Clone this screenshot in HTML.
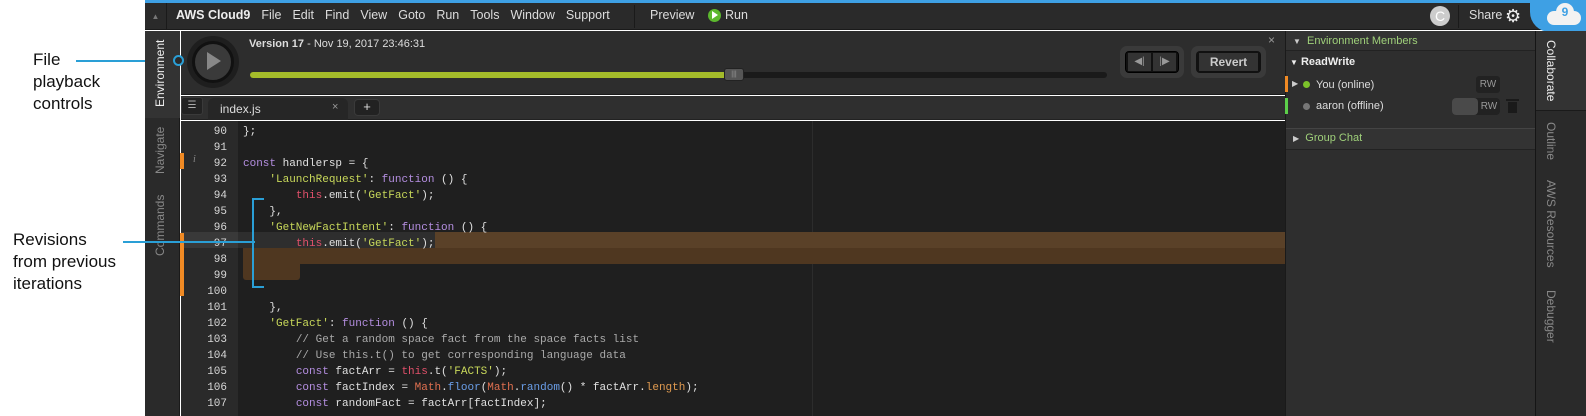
<!DOCTYPE html>
<html><head><style>
*{margin:0;padding:0;box-sizing:border-box}
body{width:1586px;height:416px;overflow:hidden;background:#fff;position:relative;font-family:"Liberation Sans",sans-serif}
.a{position:absolute}
.ann{font-size:17px;color:#111;line-height:22px}
.code{font-family:"Liberation Mono",monospace;font-size:11px;color:#e0e0e0;white-space:pre;line-height:16px}
.ln{font-family:"Liberation Mono",monospace;font-size:11px;color:#d8d8d8;line-height:16px;text-align:right;width:44px}
.k{color:#b48ee0}.s{color:#c8d85a}.t{color:#e0506a}.c{color:#aaa}.m{color:#e07050}.f{color:#6a9ee8}.o{color:#e09a50}
.vt{position:absolute;transform:rotate(-90deg);transform-origin:left top;font-size:12px;color:#888;white-space:nowrap}
.vr{position:absolute;transform:rotate(90deg);transform-origin:left top;font-size:12px;color:#888;white-space:nowrap}
</style></head><body>
<div class="a ann" style="left:33px;top:49px">File<br>playback<br>controls</div>
<div class="a ann" style="left:13px;top:229px">Revisions<br>from previous<br>iterations</div>
<div class="a" style="left:76px;top:60px;width:98px;height:2px;background:#2a9fd6"></div>
<div class="a" style="left:123px;top:241px;width:132px;height:2px;background:#2a9fd6;z-index:5"></div>
<div class="a" style="left:145px;top:0;width:1441px;height:3px;background:#3ea0e4"></div>
<div class="a" style="left:145px;top:3px;width:1441px;height:27px;background:#2a2a2a;border-bottom:1px solid #1a1a1a"></div>
<div class="a" style="left:145px;top:3px;width:22px;height:27px;border-right:1px solid #1a1a1a;color:#777;font-size:8px;text-align:center;line-height:27px">▲</div>
<div class="a" style="left:176px;top:8px;font-size:12.5px;color:#ddd;white-space:nowrap"><b style="color:#eee">AWS Cloud9</b><span style="margin-left:11px">File</span><span style="margin-left:11px">Edit</span><span style="margin-left:11px">Find</span><span style="margin-left:11px">View</span><span style="margin-left:11px">Goto</span><span style="margin-left:11px">Run</span><span style="margin-left:11px">Tools</span><span style="margin-left:11px">Window</span><span style="margin-left:11px">Support</span></div>
<div class="a" style="left:634px;top:5px;width:1px;height:23px;background:#1a1a1a"></div>
<div class="a" style="left:650px;top:8px;font-size:12.5px;color:#ddd">Preview</div>
<div class="a" style="left:708px;top:9px;width:13px;height:13px;border-radius:50%;background:#5cb82e"></div>
<div class="a" style="left:712px;top:11px;width:0;height:0;border-left:6px solid #fff;border-top:4.5px solid transparent;border-bottom:4.5px solid transparent"></div>
<div class="a" style="left:725px;top:8px;font-size:12.5px;color:#ddd">Run</div>
<div class="a" style="left:1430px;top:6px;width:20px;height:20px;border-radius:50%;background:#ccc;color:#fff;font-size:14px;text-align:center;line-height:20px">C</div>
<div class="a" style="left:1458px;top:5px;width:1px;height:23px;background:#1a1a1a"></div>
<div class="a" style="left:1469px;top:8px;font-size:12.5px;color:#ddd">Share</div>
<div class="a" style="left:1505px;top:6px;font-size:18px;color:#eee;line-height:20px">⚙</div>
<div class="a" style="left:1530px;top:0;width:56px;height:32px;background:#3ea0e4;border-bottom-left-radius:20px"></div>
<div class="a" style="left:1547px;top:11px;width:34px;height:14px;border-radius:7px;background:#f2f2f2"></div>
<div class="a" style="left:1556px;top:3px;width:18px;height:18px;border-radius:50%;background:#f2f2f2;color:#3ea0e4;font-size:12px;font-weight:bold;text-align:center;line-height:18px">9</div>
<div class="a" style="left:145px;top:31px;width:35px;height:385px;background:#2a2a2a;border-right:1px solid #1a1a1a"></div>
<div class="a" style="left:145px;top:31px;width:35px;height:87px;background:#333"></div>
<div class="vt" style="left:153px;top:107px;color:#eee">Environment</div>
<div class="vt" style="left:153px;top:174px">Navigate</div>
<div class="vt" style="left:153px;top:256px">Commands</div>
<div class="a" style="left:173px;top:55px;width:11px;height:11px;border-radius:50%;border:2px solid #2a9fd6;background:#2a2a2a;z-index:5"></div>
<div class="a" style="left:181px;top:31px;width:1104px;height:64px;background:#2d2d2d;border-bottom:1px solid #1a1a1a"></div>
<div class="a" style="left:187px;top:36px;width:52px;height:52px;border-radius:50%;background:#1e1e1e"></div>
<div class="a" style="left:192px;top:41px;width:42px;height:42px;border-radius:50%;background:#3a3a3a;border:3px solid #111"></div>
<div class="a" style="left:207px;top:52px;width:0;height:0;border-left:14px solid #888;border-top:9px solid transparent;border-bottom:9px solid transparent"></div>
<div class="a" style="left:249px;top:38px;font-size:11px;color:#ddd"><b>Version 17</b> - Nov 19, 2017 23:46:31</div>
<div class="a" style="left:250px;top:72px;width:857px;height:6px;border-radius:3px;background:#1a1a1a"></div>
<div class="a" style="left:250px;top:72px;width:480px;height:6px;border-radius:3px;background:#a4bb2a"></div>
<div class="a" style="left:724px;top:68px;width:20px;height:13px;border-radius:3px;background:#555;border:1px solid #222;color:#999;font-size:7px;text-align:center;line-height:11px">|||</div>
<div class="a" style="left:1268px;top:33px;font-size:12px;color:#999">×</div>
<div class="a" style="left:1120px;top:46px;width:64px;height:32px;border-radius:7px;background:#3a3a3a"></div>
<div class="a" style="left:1125px;top:51px;width:54px;height:22px;border-radius:4px;background:#111;border:1px solid #000"></div>
<div class="a" style="left:1128px;top:53px;width:23px;height:18px;background:#333;color:#999;font-size:10px;text-align:center;line-height:18px">◀|</div>
<div class="a" style="left:1153px;top:53px;width:23px;height:18px;background:#333;color:#999;font-size:10px;text-align:center;line-height:18px">|▶</div>
<div class="a" style="left:1191px;top:46px;width:75px;height:32px;border-radius:7px;background:#3a3a3a"></div>
<div class="a" style="left:1196px;top:51px;width:65px;height:22px;border-radius:4px;background:#111"></div>
<div class="a" style="left:1199px;top:53px;width:59px;height:18px;background:#333;color:#ccc;font-size:12px;font-weight:bold;text-align:center;line-height:18px">Revert</div>
<div class="a" style="left:181px;top:96px;width:1104px;height:24px;background:#2f2f2f;border-bottom:1px solid #222"></div>
<div class="a" style="left:181px;top:97px;width:22px;height:18px;border-radius:3px;background:#222;border:1px solid #3a3a3a;color:#aaa;font-size:10px;text-align:center;line-height:16px">☰</div>
<div class="a" style="left:208px;top:98px;width:140px;height:22px;border-radius:6px 6px 0 0;background:#262626"></div>
<div class="a" style="left:220px;top:102px;font-size:12px;color:#ddd">index.js</div>
<div class="a" style="left:332px;top:101px;font-size:11px;color:#999">×</div>
<div class="a" style="left:354px;top:99px;width:26px;height:17px;border-radius:4px;background:#222;border:1px solid #3a3a3a;color:#ddd;font-size:13px;text-align:center;line-height:14px">+</div>
<div class="a" style="left:181px;top:121px;width:57px;height:295px;background:#2a2a2a"></div>
<div class="a" style="left:238px;top:121px;width:1047px;height:295px;background:#1f1f1f"></div>
<div class="a" style="left:812px;top:121px;width:1px;height:295px;background:#2c2c2c"></div>
<div class="a" style="left:181px;top:232px;width:1104px;height:16px;background:rgba(255,255,255,0.07)"></div>
<div class="a" style="left:435px;top:232px;width:850px;height:16px;background:#5a4128"></div>
<div class="a" style="left:243px;top:248px;width:1042px;height:16px;background:#4f3720"></div>
<div class="a" style="left:243px;top:264px;width:57px;height:16px;background:#4f3720;border-radius:0 0 3px 3px"></div>
<div class="a" style="left:180px;top:153px;width:4px;height:16px;background:#f08a24"></div>
<div class="a" style="left:180px;top:233px;width:4px;height:63px;background:#f08a24"></div>
<div class="a" style="left:193px;top:154px;font-size:10px;font-style:italic;color:#888;font-family:'Liberation Serif',serif">i</div>
<div class="a ln" style="left:183px;top:124px">90<br>91<br>92<br>93<br>94<br>95<br>96<br>97<br>98<br>99<br>100<br>101<br>102<br>103<br>104<br>105<br>106<br>107</div>
<div class="a code" style="left:243px;top:124px">};

<span class="k">const</span> handlersp = {
    <span class="s">'LaunchRequest'</span>: <span class="k">function</span> () {
        <span class="t">this</span>.emit(<span class="s">'GetFact'</span>);
    },
    <span class="s">'GetNewFactIntent'</span>: <span class="k">function</span> () {
        <span class="t">this</span>.emit(<span class="s">'GetFact'</span>);



    },
    <span class="s">'GetFact'</span>: <span class="k">function</span> () {
        <span class="c">// Get a random space fact from the space facts list</span>
        <span class="c">// Use this.t() to get corresponding language data</span>
        <span class="k">const</span> factArr = <span class="t">this</span>.t(<span class="s">'FACTS'</span>);
        <span class="k">const</span> factIndex = <span class="m">Math</span>.<span class="f">floor</span>(<span class="m">Math</span>.<span class="f">random</span>() * factArr.<span class="o">length</span>);
        <span class="k">const</span> randomFact = factArr[factIndex];</div>
<div class="a" style="left:252px;top:198px;width:12px;height:2px;background:#2a9fd6"></div>
<div class="a" style="left:252px;top:198px;width:2px;height:90px;background:#2a9fd6"></div>
<div class="a" style="left:252px;top:286px;width:12px;height:2px;background:#2a9fd6"></div>
<div class="a" style="left:1285px;top:31px;width:250px;height:385px;background:#2e2e2e;border-left:1px solid #1a1a1a"></div>
<div class="a" style="left:1286px;top:31px;width:249px;height:20px;background:#333;border-bottom:1px solid #222"></div>
<div class="a" style="left:1293px;top:35px;font-size:11px;color:#9fd07a"><span style="color:#ccc;font-size:8px">▼</span>&nbsp; Environment Members</div>
<div class="a" style="left:1290px;top:56px;font-size:11px;color:#eee;font-weight:bold"><span style="font-size:8px">▼</span>&nbsp;ReadWrite</div>
<div class="a" style="left:1285px;top:76px;width:3px;height:16px;background:#f08a24"></div>
<div class="a" style="left:1292px;top:79px;font-size:8px;color:#ccc">▶</div>
<div class="a" style="left:1303px;top:81px;width:7px;height:7px;border-radius:50%;background:#7cc22a"></div>
<div class="a" style="left:1316px;top:79px;font-size:11px;color:#ddd">You (online)</div>
<div class="a" style="left:1476px;top:76px;width:24px;height:17px;border-radius:3px;background:#222;color:#999;font-size:10px;text-align:center;line-height:17px">RW</div>
<div class="a" style="left:1285px;top:98px;width:3px;height:16px;background:#5ccf4a"></div>
<div class="a" style="left:1303px;top:103px;width:7px;height:7px;border-radius:50%;background:#777"></div>
<div class="a" style="left:1316px;top:100px;font-size:11px;color:#ddd">aaron (offline)</div>
<div class="a" style="left:1452px;top:98px;width:48px;height:17px;border-radius:4px;background:#222"></div>
<div class="a" style="left:1452px;top:98px;width:26px;height:17px;border-radius:4px;background:#4a4a4a"></div>
<div class="a" style="left:1478px;top:98px;width:22px;height:17px;color:#999;font-size:10px;text-align:center;line-height:17px">RW</div>
<div class="a" style="left:1506px;top:99px;width:13px;height:2px;background:#1a1a1a"></div>
<div class="a" style="left:1508px;top:102px;width:9px;height:11px;background:#1a1a1a"></div>
<div class="a" style="left:1286px;top:128px;width:249px;height:1px;background:#444"></div>
<div class="a" style="left:1286px;top:129px;width:249px;height:21px;background:#333;border-bottom:1px solid #222"></div>
<div class="a" style="left:1293px;top:132px;font-size:11px;color:#9fd07a"><span style="color:#ccc;font-size:8px">▶</span>&nbsp; Group Chat</div>
<div class="a" style="left:1535px;top:31px;width:51px;height:385px;background:#2a2a2a;border-left:1px solid #151515"></div>
<div class="a" style="left:1536px;top:31px;width:50px;height:80px;background:#333;border-bottom:1px solid #1a1a1a"></div>
<div class="vr" style="left:1558px;top:40px;color:#eee">Collaborate</div>
<div class="vr" style="left:1558px;top:122px">Outline</div>
<div class="vr" style="left:1558px;top:180px">AWS Resources</div>
<div class="vr" style="left:1558px;top:290px">Debugger</div>
</body></html>
